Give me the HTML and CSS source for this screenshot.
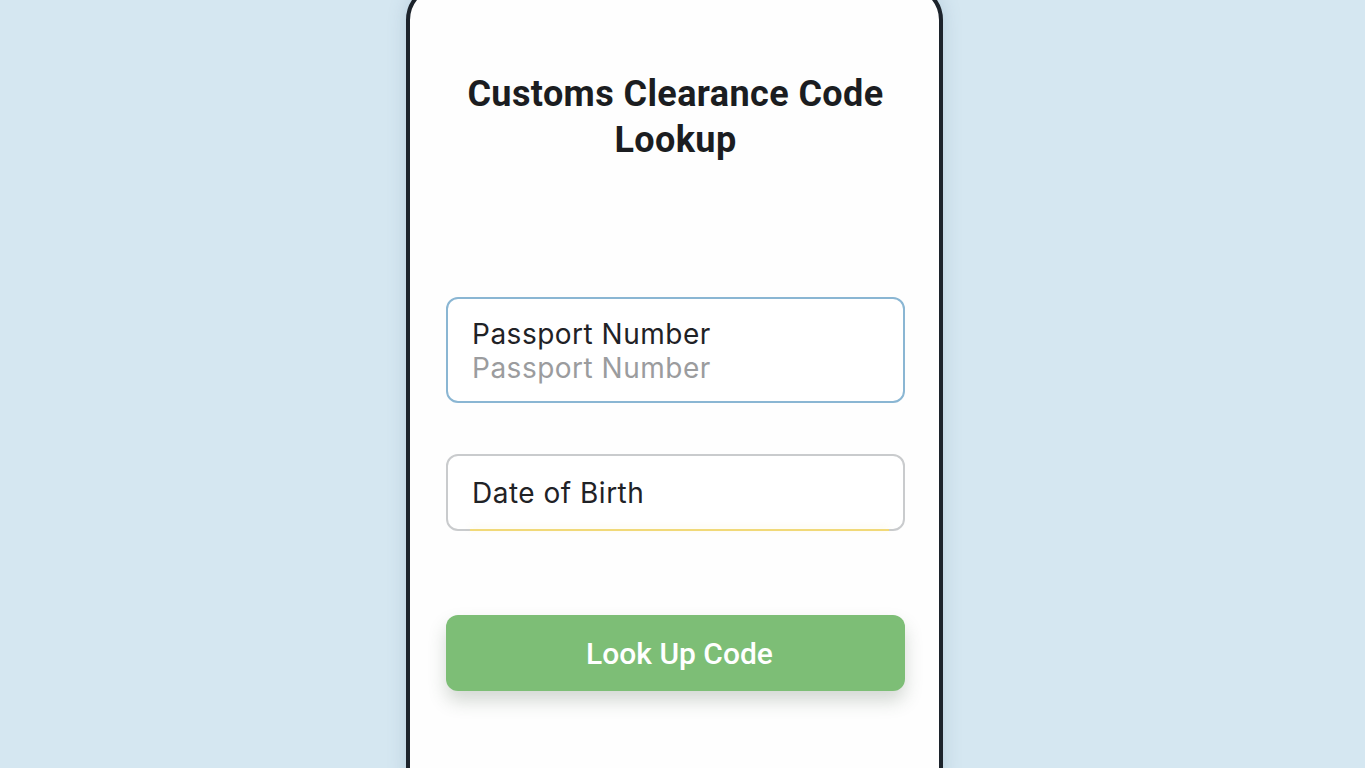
FILE: index.html
```html
<!DOCTYPE html>
<html lang="en">
<head>
    <meta charset="UTF-8">
    <meta name="viewport" content="width=device-width, initial-scale=1.0">
    <title>Customs Clearance Code Lookup</title>
    <link rel="stylesheet" href="styles.css">
</head>
<body>
    <div class="phone">
        <h1 class="title">Customs Clearance Code Lookup</h1>

        <form class="lookup-form" onsubmit="return false;">
            <label class="field field-passport">
                <span class="field-label">Passport Number</span>
                <input type="text" class="field-input" placeholder="Passport Number">
            </label>

            <label class="field field-dob">
                <span class="field-label">Date of Birth</span>
            </label>

            <button type="submit" class="lookup-button">Look Up Code</button>
        </form>
    </div>
</body>
</html>
```

FILE: styles.css
```css
* {
    margin: 0;
    padding: 0;
    box-sizing: border-box;
}

body, html {
    height: 100%;
    overflow: hidden;
    background-color: #d5e7f1;
    font-family: Roboto, "Noto Sans", sans-serif;
}

.phone {
    width: 537px;
    height: 820px;
    margin: -16px 0 0 406px;
    padding: 83px 34px 0 36px;
    background-color: #fefefe;
    border: 4px solid #1c232b;
    border-radius: 36px;
    box-shadow: 0 0 18px rgba(90, 130, 160, 0.25);
}

.title {
    text-align: center;
    font-size: 36px;
    line-height: 46px;
    font-weight: 700;
    letter-spacing: 0.4px;
    color: #1b1d21;
    padding: 0 8px;
}

.lookup-form {
    display: flex;
    flex-direction: column;
    margin-top: 134px;
}

.field {
    position: relative;
    display: flex;
    flex-direction: column;
    border: 2px solid #c9cbcd;
    border-radius: 12px;
    padding: 20px 24px 19px;
    font-family: Inter, "Noto Sans", sans-serif;
    background-color: #fff;
}

.field-passport {
    border-color: #8ab6d3;
    padding: 18px 24px 16px;
}

.field-dob {
    margin-top: 51px;
}

.field-dob::after {
    content: "";
    position: absolute;
    left: 22px;
    right: 14px;
    bottom: -2px;
    height: 2px;
    background-color: #f1d978;
    box-shadow: 0 -2px 6px rgba(245, 220, 120, 0.25);
}

.field-label {
    font-size: 28px;
    line-height: 34px;
    letter-spacing: 0.5px;
    color: #1f2226;
}

.field-input {
    border: none;
    outline: none;
    background: transparent;
    font-family: inherit;
    font-size: 28px;
    line-height: 34px;
    height: 34px;
    letter-spacing: 0.5px;
    color: #1f2226;
}

.field-input::placeholder {
    color: #9b9c9e;
}

.lookup-button {
    margin-top: 84px;
    height: 76px;
    padding-left: 8px;
    border: none;
    border-radius: 12px;
    background-color: #7dbe76;
    color: #ffffff;
    font-family: Roboto, "Noto Sans", sans-serif;
    font-size: 30px;
    font-weight: 500;
    cursor: pointer;
    box-shadow: 0 10px 18px rgba(60, 80, 60, 0.22);
}
```
